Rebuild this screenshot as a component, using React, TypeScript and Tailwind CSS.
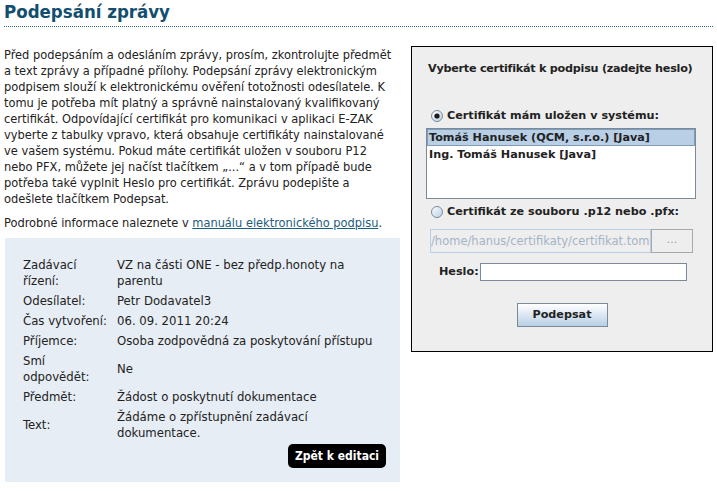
import React from 'react';

const body = '"DejaVu Sans Condensed", "DejaVu Sans", sans-serif';
const java = '"DejaVu Sans", sans-serif';

const rows: { label: string; value: string }[] = [
    { label: 'Zadávací řízení:', value: 'VZ na části ONE - bez předp.honoty na parentu' },
    { label: 'Odesílatel:', value: 'Petr Dodavatel3' },
    { label: 'Čas vytvoření:', value: '06. 09. 2011 20:24' },
    { label: 'Příjemce:', value: 'Osoba zodpovědná za poskytování přístupu' },
    { label: 'Smí odpovědět:', value: 'Ne' },
    { label: 'Předmět:', value: 'Žádost o poskytnutí dokumentace' },
    { label: 'Text:', value: 'Žádáme o zpřístupnění zadávací dokumentace.' },
];

const Radio: React.FC<{ checked?: boolean }> = ({ checked }) => (
    <svg width="12" height="12" viewBox="0 0 12 12" className="shrink-0">
        <defs>
            <linearGradient id={checked ? 'rg1' : 'rg2'} x1="0" y1="0" x2="1" y2="1">
                <stop offset="0" stopColor="#ffffff" />
                <stop offset="1" stopColor="#b8cfe5" />
            </linearGradient>
        </defs>
        <circle cx="6" cy="6" r="5.5" fill={`url(#${checked ? 'rg1' : 'rg2'})`} stroke="#7a8a99" strokeWidth="1" />
        {checked && <circle cx="6" cy="6" r="2.6" fill="#1a1a1a" />}
    </svg>
);

const SignPanel: React.FC = () => (
    <div
        className="w-[302px] h-[306px] border border-black bg-[#eeeeee] flex flex-col text-[11.2px] font-bold text-[#222]"
        style={{ fontFamily: java }}
    >
        <div className="mt-[14px] ml-[16px] leading-[16px] whitespace-nowrap tracking-[-0.25px]">
            Vyberte certifikát k podpisu (zadejte heslo)
        </div>

        <div className="mt-[31px] ml-[19px] flex items-center gap-[4px] leading-[16px]">
            <Radio checked />
            <span>Certifikát mám uložen v systému:</span>
        </div>

        <div className="mt-[4px] ml-[14px] w-[270px] h-[71px] bg-white border border-[#7a8a99] flex flex-col">
            <div className="h-[17px] leading-[15px] px-[1px] bg-[#b8cfe5] border border-[#7f9db9]">Tomáš Hanusek (QCM, s.r.o.) [Java]</div>
            <div className="h-[17px] leading-[17px] px-[2px]">Ing. Tomáš Hanusek [Java]</div>
        </div>

        <div className="mt-[5px] ml-[19px] flex items-center gap-[4px] leading-[16px]">
            <Radio />
            <span>Certifikát ze souboru .p12 nebo .pfx:</span>
        </div>

        <div className="mt-[9px] ml-[18px] flex h-[24px]">
            <div className="w-[221px] h-full border border-[#b8cfe5] bg-[#eeeeee] overflow-hidden whitespace-nowrap font-normal text-[11.5px] text-[#a3b4c6] leading-[22px]">
                /home/hanus/certifikaty/certifikat.tom.p12
            </div>
            <div className="w-[42px] h-full border border-[#a8a8a8] bg-[#eeeeee] font-normal text-[#9a9a9a] text-[11px] leading-[20px] text-center">...</div>
        </div>

        <div className="mt-[10px] ml-[27px] flex items-center h-[18px]">
            <span className="leading-[16px] mr-[1px]">Heslo:</span>
            <div className="w-[207px] h-[18px] bg-white border border-[#7a8a99]" />
        </div>

        <div className="mt-[22px] mx-auto w-[91px] h-[24px] border border-[#7a8a99] bg-gradient-to-b from-white to-[#b8cfe5] flex items-center justify-center">
            Podepsat
        </div>
    </div>
);

export default function App() {
    return (
        <div className="w-[717px] h-[491px] bg-white overflow-hidden text-[#222]" style={{ fontFamily: body }}>
            <div className="mx-[4px] h-[27px] border-b border-dotted border-[#2f6680]">
                <h1 className="text-[18.5px] font-bold leading-[24px] text-[#124e6e]">Podepsání zprávy</h1>
            </div>

            <div className="flex mt-[19px] pl-[4px]">
                <div className="w-[397px] text-[12.7px] leading-[16px]">
                    <p className="mt-[1px]">
                        Před podepsáním a odesláním zprávy, prosím, zkontrolujte předmět a text zprávy a případné přílohy.
                        Podepsání zprávy elektronickým podpisem slouží k elektronickému ověření totožnosti odesílatele. K tomu
                        je potřeba mít platný a správně nainstalovaný kvalifikovaný certifikát. Odpovídající certifikát pro
                        komunikaci v aplikaci E-ZAK vyberte z tabulky vpravo, která obsahuje certifikáty nainstalované ve vašem
                        systému. Pokud máte certifikát uložen v souboru P12 nebo&nbsp;PFX, můžete jej načíst tlačítkem „...“ a v tom
                        případě bude potřeba také vyplnit Heslo pro certifikát. Zprávu podepište a odešlete tlačítkem Podepsat.
                    </p>
                    <p className="mt-[8px]">
                        Podrobné informace naleznete v{' '}
                        <a className="text-[#1c5d80] underline">manuálu elektronického podpisu</a>.
                    </p>

                    <div className="mt-[7px] ml-[1px] w-[395px] h-[244px] bg-[#e7edf4] pt-[17px] pl-[18px] pr-[14px] flex flex-col text-[13px]">
                        <table className="border-collapse table-fixed w-[356px]">
                            <colgroup>
                                <col className="w-[94px]" />
                                <col className="w-[262px]" />
                            </colgroup>
                            <tbody>
                                {rows.map(r => (
                                    <tr key={r.label}>
                                        <td className="pr-[4px] py-[2px] align-middle">{r.label}</td>
                                        <td className="py-[2px] align-middle">{r.value}</td>
                                    </tr>
                                ))}
                            </tbody>
                        </table>
                        <div className="flex justify-end mt-[1px]">
                            <button className="w-[98px] h-[24px] rounded-[5px] bg-black text-white font-bold text-[12px]">
                                Zpět k editaci
                            </button>
                        </div>
                    </div>
                </div>

                <div className="ml-[10px]">
                    <SignPanel />
                </div>
            </div>
        </div>
    );
}
